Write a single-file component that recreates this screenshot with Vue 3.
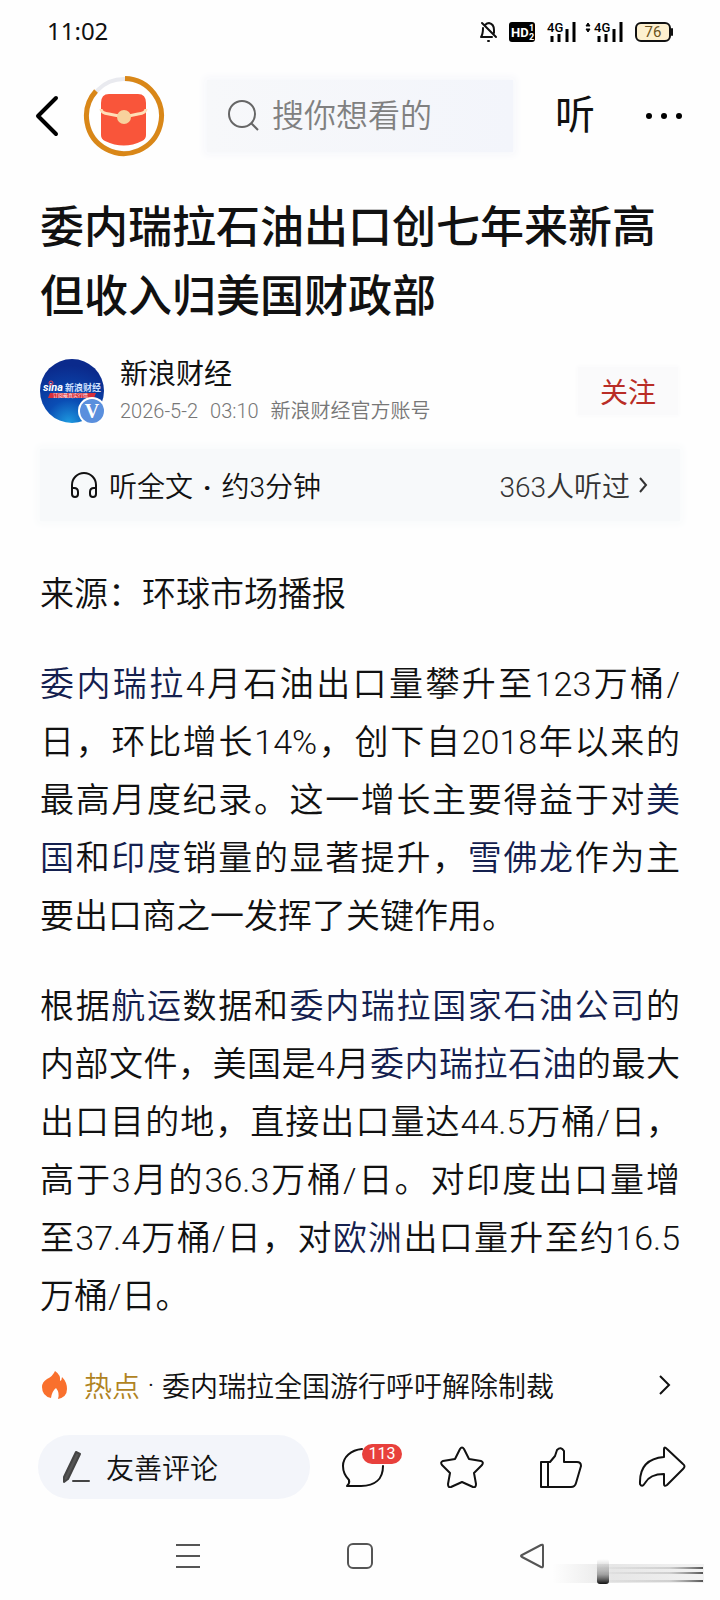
<template>
  <div class="page">
    <header class="status-bar">
      <time>11:02</time>
      <svg class="status-icons" viewBox="0 0 198 24" role="img" aria-label="手机状态">
        <!-- muted bell -->
        <g fill="none" stroke="#111" stroke-width="2" stroke-linecap="round" stroke-linejoin="round">
          <path d="M4 8Q4 14 2 17H13M6 5Q8 3 10 3q5 1 5 7v3M3 3L17 17" />
          <path d="M9 21h1" />
        </g>
        <!-- HD badge -->
        <rect x="30" y="2" width="26" height="20" rx="3" fill="#000" />
        <text class="hd" x="32" y="17">HD</text>
        <text class="hd-index" x="50" y="11">1</text>
        <text class="hd-index" x="50" y="20">2</text>
        <!-- signals -->
        <text class="net" x="68" y="12">4G</text>
        <path d="M73 16v6M80 14v8M88 9v13M95 2v20" stroke="#000" stroke-width="3" />
        <path d="M107 6l2-3 2 3zM107 9l2 3 2-3z" stroke="#000" />
        <text class="net" x="115" y="12">4G</text>
        <path d="M120 16v6M127 14v8M135 9v13M142 2v20" stroke="#000" stroke-width="3" />
        <!-- battery -->
        <rect x="157" y="3" width="34" height="18" rx="5" fill="#fdf0cf" stroke="#111" stroke-width="2" />
        <path d="M193 9v6" stroke="#111" stroke-width="2" stroke-linecap="round" />
        <text class="battery" x="174" y="17" text-anchor="middle">76</text>
      </svg>
    </header>

    <nav class="top-bar">
      <button class="back" aria-label="返回">
        <svg width="24" height="42" viewBox="0 0 24 42">
          <path d="M21 3L3 21L21 39" fill="none" stroke="#000" stroke-width="4" stroke-linecap="round" stroke-linejoin="round" />
        </svg>
      </button>
      <button class="reward" aria-label="红包">
        <svg width="82" height="82" viewBox="0 0 82 82">
          <circle cx="41" cy="41" r="37" fill="#fff" stroke="#e9eaef" stroke-width="4" />
          <path d="M42 3.500A37.500 37.500 0 1 1 13 16" fill="none" stroke="#d98718" stroke-width="5" />
          <path d="M18 28q0-9 8-9h29q8 0 8 9v32q0 4-4 6q-18 9-37 0q-4-2-4-6z" fill="#f9553a" />
          <path d="M18 34q0 4 8 5q15 4 29 0q8-1 8-5" fill="none" stroke="#ffe0b8" stroke-width="3" />
          <circle cx="41" cy="42" r="7" fill="#f8d29d" />
        </svg>
      </button>
      <label class="search">
        <svg width="32" height="32" viewBox="0 0 32 32" fill="none" stroke="#666" stroke-width="2">
          <circle cx="15" cy="14" r="13" />
          <path d="M24 23l7 7" />
        </svg>
        <input type="search" placeholder="搜你想看的" aria-label="搜索" />
      </label>
      <button class="listen">听</button>
      <button class="more" aria-label="更多">
        <svg width="38" height="8" viewBox="0 0 38 8">
          <circle cx="4" cy="4" r="3" /><circle cx="19" cy="4" r="3" /><circle cx="34" cy="4" r="3" />
        </svg>
      </button>
    </nav>

    <main class="article">
      <h1>委内瑞拉石油出口创七年来新高<br />但收入归美国财政部</h1>

      <section class="author">
        <svg class="avatar" viewBox="0 0 66 64" role="img" aria-label="新浪财经">
          <defs>
            <radialGradient id="sea" cx="0.45" cy="1" r="0.9">
              <stop offset="0" stop-color="#1e9be0" />
              <stop offset="0.4" stop-color="#0a4db4" />
              <stop offset="1" stop-color="#0b2a8c" />
            </radialGradient>
          </defs>
          <circle cx="32" cy="32" r="32" fill="url(#sea)" />
          <path d="M10 34H56L54 39H8z" fill="#d8303c" />
          <text class="logo" x="3" y="32">sina</text>
          <text class="logo-cn" x="25" y="32">新浪财经</text>
          <text class="logo-sub" x="13" y="38">订阅最真实行情</text>
          <circle cx="11" cy="24" r="2" fill="none" stroke="#e6405a" />
          <circle cx="52" cy="52" r="14" fill="#fff" />
          <circle cx="52" cy="52" r="12" fill="#5a8fdd" />
          <text class="vip" x="52" y="59" text-anchor="middle">V</text>
        </svg>
        <div class="author-info">
          <strong>新浪财经</strong>
          <p><span>2026-5-2</span><span>03:10</span><span>新浪财经官方账号</span></p>
        </div>
        <button class="follow">关注</button>
      </section>

      <button class="audio">
        <svg width="28" height="28" viewBox="0 0 28 28" fill="none" stroke="#111" stroke-width="2" stroke-linecap="round" stroke-linejoin="round">
          <path d="M2 21V14a12 12 0 0 1 24 0v7" />
          <path d="M2 17h2q4 0 4 4v2q0 3-3 3t-3-3zM26 17h-2q-4 0-4 4v2q0 3 3 3t3-3z" />
        </svg>
        <span class="audio-title">听全文<b>·</b>约3分钟</span>
        <span class="heard">363人听过</span>
        <svg width="10" height="18" viewBox="0 0 10 18">
          <path d="M2 2l6 7-6 7" fill="none" stroke="#333" stroke-width="2" />
        </svg>
      </button>

      <div class="body">
        <p>来源：环球市场播报</p>
        <p v-for="(parts, i) in paragraphs" :key="i">
          <template v-for="(part, j) in parts" :key="j"><a v-if="part.link" href="#">{{ part.text }}</a><template v-else>{{ part.text }}</template></template>
        </p>
      </div>
    </main>

    <a class="hot" href="#">
      <svg width="26" height="30" viewBox="0 0 26 30">
        <path d="M13 1q6 4 5 10q2-1 2-4q5 5 5 12q0 8-9 10q2-6-2-11q-4 3-5 10Q0 26 0 17q0-5 5-8q6-3 8-8z" fill="#f9702d" />
      </svg>
      <span class="hot-label">热点</span>
      <span class="hot-dot">·</span>
      <span>委内瑞拉全国游行呼吁解除制裁</span>
      <svg class="hot-arrow" width="14" height="22" viewBox="0 0 14 22">
        <path d="M2 2l9 9-9 9" fill="none" stroke="#111" stroke-width="2" />
      </svg>
    </a>

    <footer class="actions">
      <button class="comment-box">
        <svg width="28" height="34" viewBox="0 0 28 34">
          <path d="M14 2l4 2L6 29l-4 3v-5z" fill="#555" stroke="#444" />
          <path d="M11 31h16" stroke="#444" stroke-width="2" />
        </svg>
        <span>友善评论</span>
      </button>
      <div class="action-icons">
        <button class="comments" aria-label="评论 113">
          <svg width="44" height="42" viewBox="0 0 44 42">
            <path d="M21 3C10 4 2 11 2 20q0 8 6 14q1 3-2 6h14c14 0 22-7 22-20" />
          </svg>
          <span class="badge">113</span>
        </button>
        <button aria-label="收藏">
          <svg width="44" height="42" viewBox="0 0 44 42">
            <path d="M20 3q2-3 4 0l5 10 12 2q3 1 1 4l-8 8 2 11q0 4-3 3l-11-5-11 5q-3 1-3-3l2-11-8-8q-2-3 1-4l12-2z" />
          </svg>
        </button>
        <button aria-label="点赞">
          <svg width="44" height="42" viewBox="0 0 44 42">
            <path d="M2 16h9l5-6 2-6q4-4 7 1v11h13q4 0 4 4l-5 17q-1 4-5 4H2zM9 16v25" />
          </svg>
        </button>
        <button aria-label="分享">
          <svg width="48" height="42" viewBox="0 0 48 42">
            <path d="M26 3q0-3 3 0l16 15q3 2 0 5L29 39q-3 2-3-1V28Q12 28 7 37q-3 5-5 1Q1 13 26 11z" />
          </svg>
        </button>
      </div>
    </footer>

    <nav class="system-nav">
      <button aria-label="最近任务">
        <svg width="26" height="26" viewBox="0 0 26 26"><path d="M1 2h24M1 13h24M1 24h24" /></svg>
      </button>
      <button aria-label="主屏幕">
        <svg width="26" height="26" viewBox="0 0 26 26"><rect x="1" y="1" width="24" height="24" rx="5" /></svg>
      </button>
      <button aria-label="返回">
        <svg width="26" height="26" viewBox="0 0 26 26"><path d="M22 2q2-1 2 1v20q0 2-2 1L3 14q-2-1 0-2z" /></svg>
      </button>
      <svg class="streak" width="152" height="26" viewBox="0 0 152 26" aria-hidden="true">
        <defs>
          <linearGradient id="fade-x">
            <stop offset="0" stop-color="#888" stop-opacity="0" />
            <stop offset="0.7" stop-color="#888" stop-opacity="0.3" />
            <stop offset="1" stop-color="#555" />
          </linearGradient>
          <linearGradient id="fade-y" x2="0" y2="1">
            <stop offset="0" stop-color="#999" stop-opacity="0" />
            <stop offset="0.6" stop-color="#888" stop-opacity="0.7" />
            <stop offset="1" stop-color="#111" />
          </linearGradient>
          <linearGradient id="haze">
            <stop offset="0" stop-color="#888" stop-opacity="0" />
            <stop offset="0.4" stop-color="#888" stop-opacity="0.2" />
            <stop offset="1" stop-color="#888" stop-opacity="0.1" />
          </linearGradient>
        </defs>
        <rect x="0" y="5" width="152" height="19" fill="url(#haze)" />
        <rect x="40" y="8" width="111" height="2" fill="url(#fade-x)" />
        <rect x="40" y="13" width="111" height="2" fill="url(#fade-x)" />
        <rect x="40" y="21" width="111" height="2" fill="url(#fade-x)" />
        <rect x="45" y="0" width="12" height="25" rx="3" fill="url(#fade-y)" />
      </svg>
    </nav>
  </div>
</template>

<script setup>
const t = (text) => ({ text })
const a = (text) => ({ text, link: true })

const paragraphs = [
  [
    a('委内瑞拉'),
    t('4月石油出口量攀升至123万桶/日，环比增长14%，创下自2018年以来的最高月度纪录。这一增长主要得益于对'),
    a('美国'),
    t('和'),
    a('印度'),
    t('销量的显著提升，'),
    a('雪佛龙'),
    t('作为主要出口商之一发挥了关键作用。')
  ],
  [
    t('根据'),
    a('航运'),
    t('数据和'),
    a('委内瑞拉国家石油公司'),
    t('的内部文件，美国是4月'),
    a('委内瑞拉石油'),
    t('的最大出口目的地，直接出口量达44.5万桶/日，高于3月的36.3万桶/日。对印度出口量增至37.4万桶/日，对'),
    a('欧洲'),
    t('出口量升至约16.5万桶/日。')
  ]
]
</script>

<style>
body {
  margin: 0;
  background: #fefefe;
}
</style>

<style scoped>
.page {
  min-height: 100vh;
  display: flex;
  flex-direction: column;
  box-sizing: border-box;
  font-family: Roboto, "Noto Sans CJK SC", sans-serif;
  font-size: 28px;
  font-weight: 350;
  color: #111;
}

button {
  padding: 0;
  border: 0;
  background: none;
  font: inherit;
  color: inherit;
}

a {
  color: inherit;
  text-decoration: none;
}

svg {
  display: block;
  flex: none;
}

.status-bar {
  height: 64px;
  padding: 0 43px 0 47px;
  display: flex;
  align-items: center;
  justify-content: space-between;
}

.status-bar time {
  font: 24px "Noto Sans", sans-serif;
  line-height: 28px;
  padding-bottom: 2px;
}

.status-icons {
  width: 198px;
  height: 24px;
  font-family: Roboto, sans-serif;
}

.hd {
  font-size: 13px;
  font-weight: 700;
  fill: #fff;
}

.hd-index {
  font-size: 9px;
  font-weight: 700;
  fill: #fff;
}

.net {
  font-size: 13px;
  font-weight: 500;
}

.battery {
  font-size: 15px;
  font-weight: 400;
  fill: #6b5320;
}

.top-bar {
  height: 104px;
  padding: 0 37px 0 35px;
  display: flex;
  align-items: center;
}

.reward {
  margin-left: 24px;
}

.search {
  flex: 1;
  min-width: 0;
  height: 72px;
  margin: 0 42px;
  padding-left: 20px;
  display: flex;
  align-items: center;
  gap: 13px;
  background: linear-gradient(90deg, #f7f8fa, #f3f5fb);
  box-shadow: 0 0 8px 3px #f6f7fb;
}

.search input {
  flex: 1;
  min-width: 0;
  padding: 0;
  border: 0;
  outline: 0;
  background: none;
  font: inherit;
  font-size: 32px;
}

.search input::placeholder {
  color: #808080;
}

.listen {
  font-size: 40px;
  line-height: 56px;
  font-weight: 400;
}

.more {
  margin-left: 50px;
}

.article {
  padding: 0 40px;
}

h1 {
  margin: 26px 0 0;
  font-size: 44px;
  line-height: 69px;
  font-weight: 500;
}

.author {
  margin-top: 25px;
  display: flex;
  align-items: center;
}

.avatar {
  width: 66px;
  height: 64px;
  margin-right: 14px;
}

.logo {
  font: italic 700 11px Roboto, sans-serif;
  fill: #fff;
}

.logo-cn {
  font-size: 9px;
  font-weight: 700;
  fill: #cfe0ff;
}

.logo-sub {
  font-size: 5px;
  fill: #fff;
}

.vip {
  font: 700 20px "Liberation Serif", serif;
  fill: #fff;
}

.author-info {
  flex: 1;
}

.author-info strong {
  display: block;
  font-weight: 400;
  line-height: 36px;
}

.author-info p {
  margin: 4px 0 0;
  display: flex;
  gap: 12px;
  font-size: 20px;
  line-height: 28px;
  color: #777;
}

.follow {
  width: 100px;
  height: 48px;
  margin-right: 2px;
  font-weight: 400;
  color: #b92d26;
  background: #fafafb;
  box-shadow: 0 0 4px 1px #fafafb;
}

.audio {
  width: 100%;
  height: 72px;
  margin-top: 24px;
  padding: 0 32px 0 30px;
  display: flex;
  align-items: center;
  background: #f7f9fa;
  box-shadow: 0 0 8px 3px #f8fafb;
}

.audio-title {
  margin-left: 11px;
}

.audio-title b {
  margin: 0 10px;
}

.heard {
  margin: 0 8px 0 auto;
  color: #333;
}

.body {
  margin-top: 44px;
  font-size: 34px;
  line-height: 58px;
}

.body p {
  margin: 0 0 32px;
  text-align: justify;
}

.body a {
  color: #14204f;
}

.hot {
  margin-top: 8px;
  padding: 0 48px 0 42px;
  height: 40px;
  display: flex;
  align-items: center;
}

.hot-label {
  margin-left: 16px;
  color: #b0831f;
}

.hot-dot {
  width: 22px;
  text-align: center;
}

.hot-arrow {
  margin-left: auto;
}

.actions {
  margin-top: 30px;
  padding: 0 34px 0 38px;
  display: flex;
  align-items: center;
}

.action-icons {
  flex: 1;
  margin-left: 31px;
  display: flex;
  justify-content: space-between;
}

.actions svg {
  fill: none;
  stroke: #111;
  stroke-width: 2;
  stroke-linejoin: round;
  stroke-linecap: round;
}

.comment-box {
  flex: 0 1 272px;
  height: 64px;
  padding-left: 24px;
  display: flex;
  align-items: center;
  gap: 16px;
  border-radius: 32px;
  background: #f3f5fa;
}

.comments {
  position: relative;
}

.badge {
  position: absolute;
  top: -2px;
  left: 21px;
  width: 40px;
  border-radius: 10px;
  background: #e8403c;
  color: #fff;
  font-size: 16px;
  font-weight: 400;
  line-height: 20px;
  text-align: center;
}

.system-nav {
  position: relative;
  box-sizing: border-box;
  height: 100px;
  padding: 14px 102px 0;
  display: flex;
  align-items: center;
  justify-content: space-around;
}

.system-nav button svg {
  fill: none;
  stroke: #555;
  stroke-width: 2;
}

.streak {
  position: absolute;
  right: 16px;
  bottom: 14px;
}
</style>
